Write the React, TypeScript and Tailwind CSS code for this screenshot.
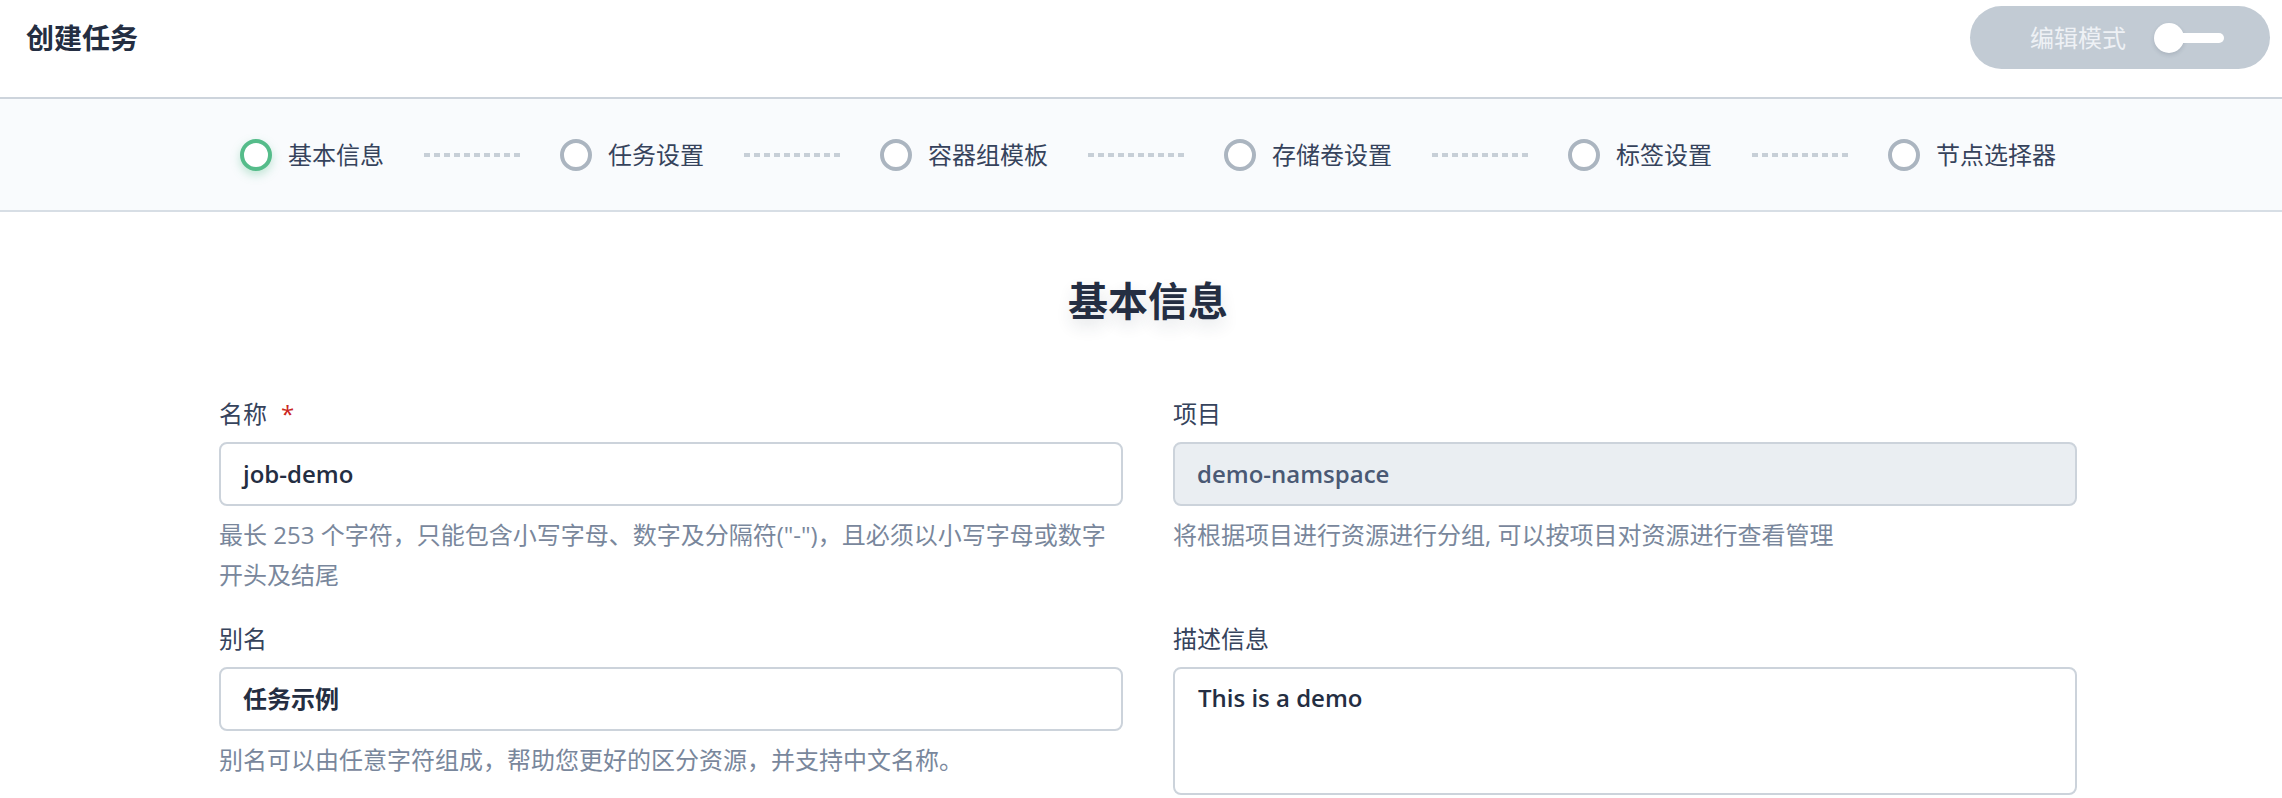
const steps = ['基本信息', '任务设置', '容器组模板', '存储卷设置', '标签设置', '节点选择器']

function Step({ label, active, last }: { label: string; active: boolean; last: boolean }) {
  return (
    <div className="flex items-center">
      <div
        className={`w-[32px] h-[32px] rounded-full border-[4px] bg-white ${
          active
            ? 'border-[#55bc8a] shadow-[0_4px_10px_rgba(85,188,138,0.35)]'
            : 'border-[#abb5c0]'
        }`}
      />
      <div className="ml-[16px] text-[24px] leading-[32px] text-[#36435c] whitespace-nowrap">
        {label}
      </div>
      {!last && (
        <div className="mx-[40px] w-[96px] h-[4px] bg-[repeating-linear-gradient(to_right,#c7cfd7_0px,#c7cfd7_6px,transparent_6px,transparent_10px)]" />
      )}
    </div>
  )
}

function Field({
  label,
  required,
  hint,
  children,
}: {
  label: string
  required?: boolean
  hint?: string
  children: React.ReactNode
}) {
  return (
    <div className="flex flex-col">
      <div className="text-[24px] leading-[40px] text-[#36435c] mb-[8px]">
        {label}
        {required && <span className="ml-[14px] text-[#ca2621]">*</span>}
      </div>
      {children}
      {hint && (
        <div className="mt-[9px] text-[24px] leading-[40px] text-[#79879c]">{hint}</div>
      )}
    </div>
  )
}

export default function App() {
  return (
    <div className="w-full min-h-screen bg-white font-['Open_Sans','Noto_Sans_CJK_SC',sans-serif]">
      {/* header */}
      <div className="h-[99px] border-b-2 border-[#cdd4dc] flex items-start pt-[6px] pl-[26px] pr-[12px]">
        <div className="mt-[12px] text-[28px] leading-[40px] font-semibold text-[#242e42]">
          创建任务
        </div>
        <div className="ml-auto w-[300px] h-[63px] rounded-full bg-[#c2cbd4] flex items-center pl-[60px]">
          <span className="text-[24px] text-[#eef1f5]">编辑模式</span>
          <div className="ml-[28px] flex items-center">
            <div className="w-[30px] h-[30px] rounded-full bg-white shadow-[0_2px_4px_rgba(36,46,66,0.15)]" />
            <div className="-ml-[4px] w-[44px] h-[10px] rounded-r-full bg-white" />
          </div>
        </div>
      </div>

      {/* steps */}
      <div className="h-[113px] bg-[#f9fbfd] border-b-2 border-[#d7dee5] flex items-center justify-center pl-[14px]">
        {steps.map((s, i) => (
          <Step key={s} label={s} active={i === 0} last={i === steps.length - 1} />
        ))}
      </div>

      {/* content */}
      <div className="pl-[14px]">
        <div className="w-[1858px] mx-auto">
          <h2 className="mt-[61px] text-center text-[40px] leading-[56px] font-bold text-[#242e42] [text-shadow:0_8px_16px_rgba(36,46,66,0.12)]">
            基本信息
          </h2>

          <div className="mt-[65px] grid grid-cols-2 gap-x-[50px] gap-y-[24px]">
            <Field
              label="名称"
              required
              hint='最长 253 个字符，只能包含小写字母、数字及分隔符("-")，且必须以小写字母或数字开头及结尾'
            >
              <div className="h-[64px] rounded-[8px] border-2 border-[#ccd3db] bg-white flex items-center pl-[22px] text-[24px] font-semibold text-[#242e42]">
                job-demo
              </div>
            </Field>
            <Field label="项目" hint="将根据项目进行资源进行分组, 可以按项目对资源进行查看管理">
              <div className="h-[64px] rounded-[8px] border-2 border-[#ccd3db] bg-[#eaeef2] flex items-center pl-[22px] text-[24px] font-semibold text-[#4a5974]">
                demo-namspace
              </div>
            </Field>
            <Field label="别名" hint="别名可以由任意字符组成，帮助您更好的区分资源，并支持中文名称。">
              <div className="h-[64px] rounded-[8px] border-2 border-[#ccd3db] bg-white flex items-center pl-[22px] text-[24px] font-bold text-[#242e42]">
                任务示例
              </div>
            </Field>
            <Field label="描述信息">
              <div className="h-[128px] rounded-[8px] border-2 border-[#ccd3db] bg-white pl-[23px] pt-[11px] text-[24px] leading-[36px] font-semibold text-[#242e42]">
                This is a demo
              </div>
            </Field>
          </div>
        </div>
      </div>
    </div>
  )
}
